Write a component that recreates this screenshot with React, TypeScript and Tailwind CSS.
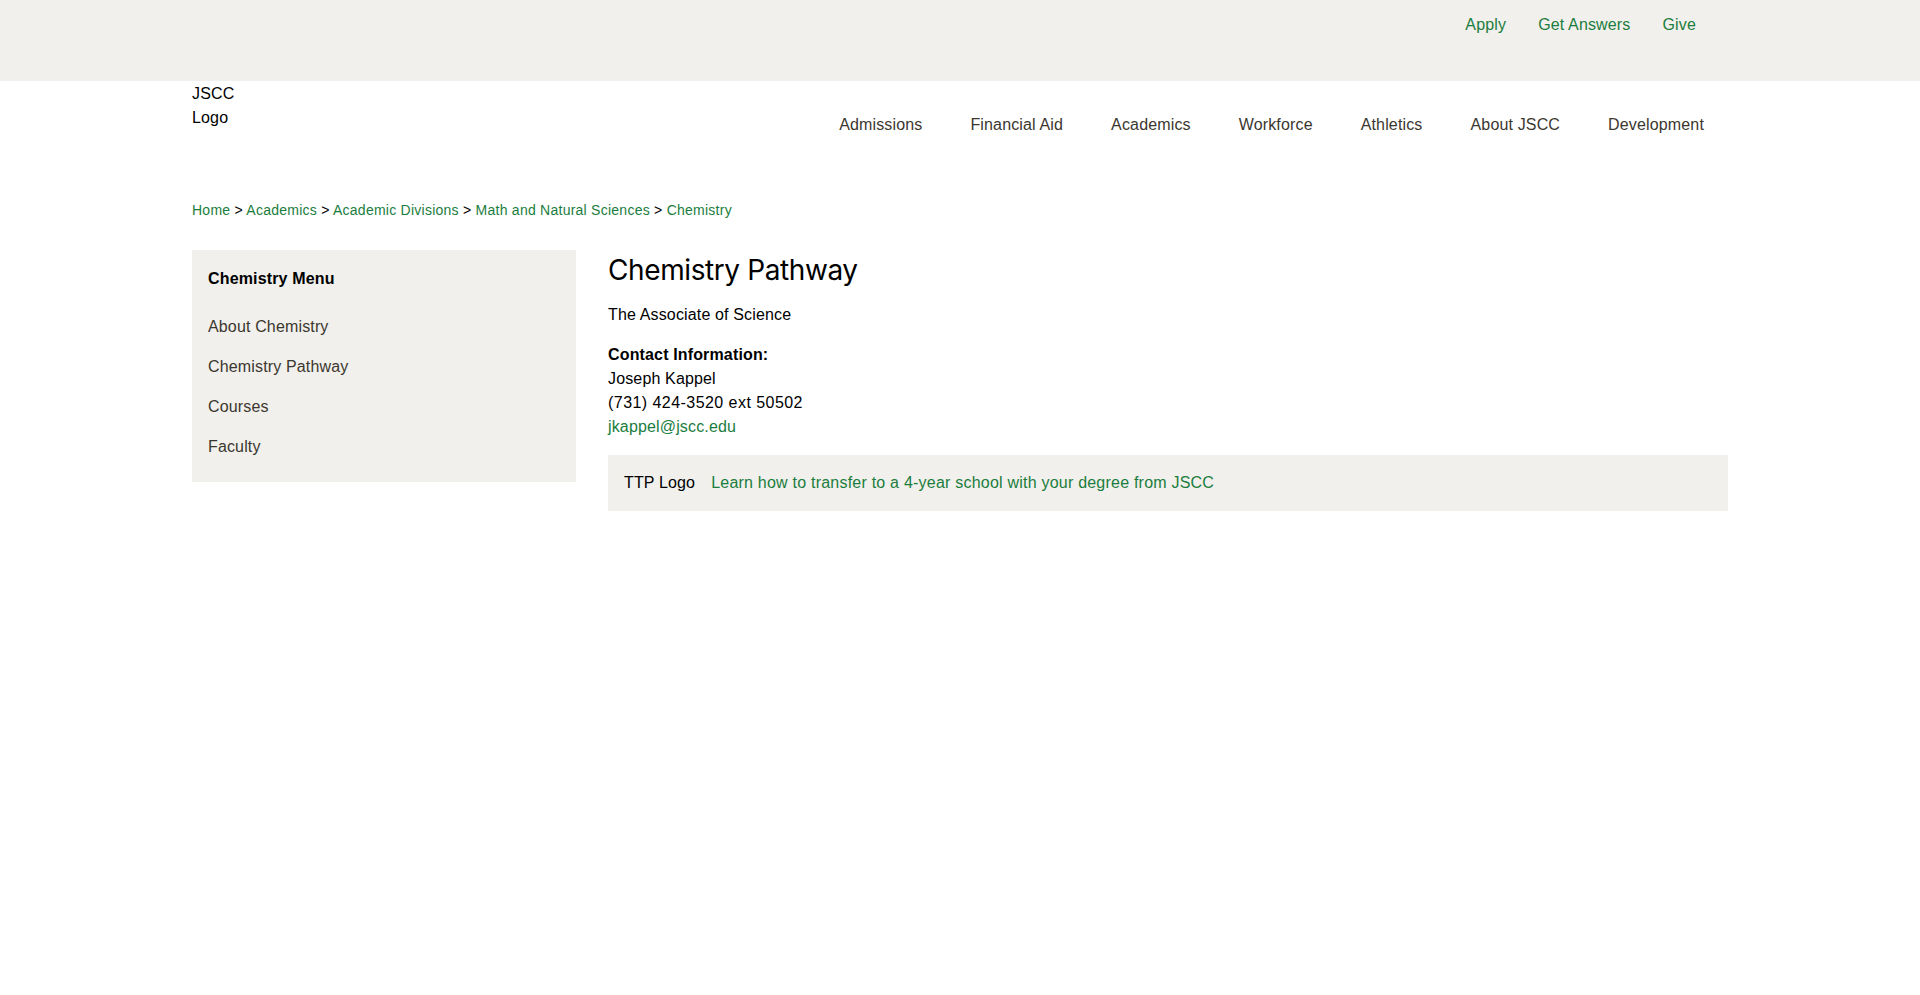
import React from "react";

const green = "text-[#1b7d3d]";

export default function App() {
  const nav = ["Admissions", "Financial Aid", "Academics", "Workforce", "Athletics", "About JSCC", "Development"];
  const menu = ["About Chemistry", "Chemistry Pathway", "Courses", "Faculty"];
  return (
    <div className="min-h-[995px] bg-white text-black font-['Liberation_Sans','Arial',sans-serif] text-[16px] leading-6 tracking-[0.15px]">
      <div className="h-[81px] bg-[#f1f0ec]">
        <div className="mx-auto flex max-w-[1536px] justify-end pr-4 pt-[13px]">
          {["Apply", "Get Answers", "Give"].map((l) => (
            <a key={l} className={`px-4 ${green}`} href="#">
              {l}
            </a>
          ))}
        </div>
      </div>
      <div className="mx-auto max-w-[1536px]">
        <div className="flex h-[100px] items-start justify-between">
          <div className="w-[50px] pt-[1px] leading-6">JSCC Logo</div>
          <nav className="mt-[32px] flex">
            {nav.map((n) => (
              <a key={n} href="#" className="px-6 text-[#3b372f]">
                {n}
              </a>
            ))}
          </nav>
        </div>
        <div className="mt-[19px] text-[14px] leading-5 tracking-[0.25px]">
          <a href="#" className={green}>Home</a> &gt;{" "}
          <a href="#" className={green}>Academics</a> &gt;{" "}
          <a href="#" className={green}>Academic Divisions</a> &gt;{" "}
          <a href="#" className={green}>Math and Natural Sciences</a> &gt;{" "}
          <a href="#" className={green}>Chemistry</a>
        </div>
        <div className="mt-[30px] flex items-start gap-8">
          <aside className="w-[384px] shrink-0 bg-[#f1f0ec] px-4 pb-[15px] pt-[17px]">
            <div className="font-bold">Chemistry Menu</div>
            <ul className="mt-4">
              {menu.map((m) => (
                <li key={m} className="py-2 text-[#3b372f]">
                  {m}
                </li>
              ))}
            </ul>
          </aside>
          <main className="flex-1">
            <h1 className="mt-[3px] font-['Inter','Liberation_Sans',sans-serif] text-[28px] leading-[34px] font-normal tracking-[-0.4px]">
              Chemistry Pathway
            </h1>
            <p className="mt-4">The Associate of Science</p>
            <div className="mt-4">
              <div className="font-bold">Contact Information:</div>
              <div>Joseph Kappel</div>
              <div className="tracking-[0.45px]">(731) 424-3520 ext 50502</div>
              <a href="#" className={green}>jkappel@jscc.edu</a>
            </div>
            <div className="mt-4 flex items-center bg-[#f1f0ec] px-4 py-4">
              <span>TTP Logo</span>
              <a href="#" className={`ml-4 tracking-[0.22px] ${green}`}>
                Learn how to transfer to a 4-year school with your degree from JSCC
              </a>
            </div>
          </main>
        </div>
      </div>
    </div>
  );
}
